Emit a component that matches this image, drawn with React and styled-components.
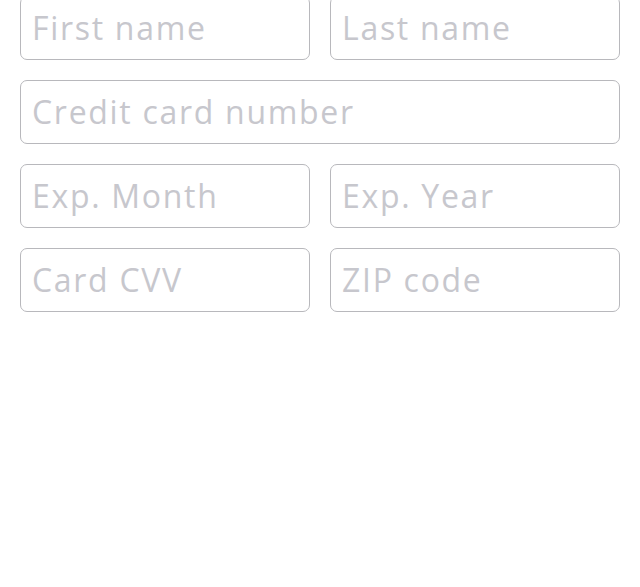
import React from 'react';
import styled, { createGlobalStyle } from 'styled-components';

const GlobalStyle = createGlobalStyle`
  html, body {
    margin: 0;
    padding: 0;
    background: #ffffff;
  }
  body {
    font-family: 'Open Sans', Lato, sans-serif;
  }
`;

const Form = styled.form`
  display: grid;
  grid-template-columns: 1fr 1fr;
  gap: 20px;
  padding: 0 20px;
  margin-top: -4px;
`;

const Field = styled.input`
  box-sizing: border-box;
  grid-column: ${({ $wide }) => ($wide ? '1 / -1' : 'auto')};
  width: 100%;
  height: 64px;
  margin: 0;
  padding: 0 11px 2px;
  border: 1px solid #b8b8bc;
  border-radius: 7px;
  background: #ffffff;
  font-family: 'Open Sans', Lato, sans-serif;
  font-size: 32px;
  letter-spacing: 1.7px;
  color: #333;
  outline: none;

  &::placeholder {
    color: #c7c7cd;
    opacity: 1;
  }
`;

const fields = [
  { name: 'first', label: 'First name' },
  { name: 'last', label: 'Last name' },
  { name: 'card', label: 'Credit card number', wide: true },
  { name: 'month', label: 'Exp. Month' },
  { name: 'year', label: 'Exp. Year' },
  { name: 'cvv', label: 'Card CVV' },
  { name: 'zip', label: 'ZIP code' },
];

const App = () => {
  return (
    <>
      <GlobalStyle />
      <Form onSubmit={(e) => e.preventDefault()}>
        {fields.map((f) => (
          <Field key={f.name} name={f.name} placeholder={f.label} $wide={f.wide} />
        ))}
      </Form>
    </>
  );
};

export default App;
